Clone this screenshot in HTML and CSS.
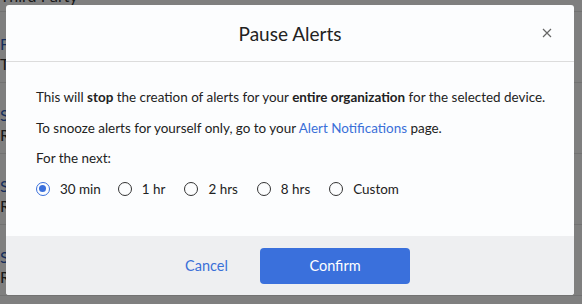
FILE: index.html
```html
<!DOCTYPE html>
<html lang="en">
<head>
    <meta charset="UTF-8">
    <title>Pause Alerts</title>
    <link rel="stylesheet" href="styles.css">
</head>
<body>
    <!-- page behind the overlay -->
    <div class="page">
        <div class="row row-top"><span class="dark">Third Party</span></div>
        <div class="row"><span class="link">F</span><span class="dark">T</span></div>
        <div class="row"><span class="link">S</span><span class="dark">R</span></div>
        <div class="row"><span class="link">S</span><span class="dark">R</span></div>
        <div class="row"><span class="link">S</span><span class="dark">R</span></div>
    </div>

    <div class="overlay">
        <div class="modal">
            <div class="modal-header">
                <h2>Pause Alerts</h2>
                <button class="close" aria-label="Close">
                    <svg width="10" height="10" viewBox="0 0 10 10">
                        <path d="M1 1 L9 9 M9 1 L1 9" stroke="#666" stroke-width="1.2" fill="none"/>
                    </svg>
                </button>
            </div>
            <div class="modal-body">
                <p>This will <b>stop</b> the creation of alerts for your <b>entire organization</b> for the selected device.</p>
                <p>To snooze alerts for yourself only, go to your <a href="#">Alert Notifications</a> page.</p>
                <p>For the next:</p>
                <div class="options">
                    <label class="option"><span class="radio checked"></span>30 min</label>
                    <label class="option"><span class="radio"></span>1 hr</label>
                    <label class="option"><span class="radio"></span>2 hrs</label>
                    <label class="option"><span class="radio"></span>8 hrs</label>
                    <label class="option"><span class="radio"></span>Custom</label>
                </div>
            </div>
            <div class="modal-footer">
                <button class="btn-cancel">Cancel</button>
                <button class="btn-confirm">Confirm</button>
            </div>
        </div>
    </div>
</body>
</html>
```

FILE: styles.css
```css
* {
    margin: 0;
    padding: 0;
    box-sizing: border-box;
}

body {
    font-family: 'Lato', 'Noto Sans', sans-serif;
    color: #222;
    background: #fff;
    width: 582px;
    height: 304px;
    overflow: hidden;
    position: relative;
}

/* Page under the backdrop */
.row {
    height: 71px;
    border-bottom: 1px solid #e4e4e4;
    padding: 22px 0 0 0;
    font-size: 16px;
    line-height: 20px;
    display: flex;
    flex-direction: column;
}

.row-top {
    height: 24px;
    padding: 0;
    margin-top: -12px;
    line-height: 16px;
    padding-top: 0;
}

.row .link {
    color: #2d5bb9;
}

.row .dark {
    color: #333;
}

/* Backdrop */
.overlay {
    position: absolute;
    inset: 0;
    background: rgba(0, 0, 0, 0.5);
    padding: 5px 8px 9px 6px;
}

.modal {
    background: #fcfdfe;
    border-radius: 3px;
    height: 290px;
    display: flex;
    flex-direction: column;
    overflow: hidden;
}

.modal-header {
    height: 57px;
    border-bottom: 1px solid #dcdcdc;
    display: flex;
    align-items: center;
    justify-content: center;
    position: relative;
}

.modal-header h2 {
    font-size: 19px;
    font-weight: 400;
    color: #222;
}

.close {
    position: absolute;
    right: 22px;
    top: 23px;
    background: none;
    border: none;
    width: 10px;
    height: 10px;
    display: flex;
}

.modal-body {
    flex: 1;
    padding: 27px 20px 0 30px;
    font-size: 13.45px;
    line-height: 17px;
    white-space: nowrap;
}

.modal-body p {
    margin-bottom: 13.5px;
}

.modal-body a {
    color: #3a6fd8;
    text-decoration: none;
}

.options {
    display: flex;
    margin-top: 12px;
}

.option {
    display: flex;
    align-items: center;
    margin-right: 19px;
}

.option:first-child {
    margin-right: 17px;
}

.radio {
    width: 14px;
    height: 14px;
    border: 1.5px solid #333;
    border-radius: 50%;
    margin-right: 10px;
    position: relative;
}

.radio.checked {
    border-color: #3a70dc;
}

.radio.checked::after {
    content: '';
    position: absolute;
    left: 2px;
    top: 2px;
    width: 7px;
    height: 7px;
    border-radius: 50%;
    background: #3a70dc;
}

.modal-footer {
    height: 59px;
    background: #eeeff1;
    display: flex;
    align-items: center;
    padding-left: 153px;
}

.modal-footer button {
    font-family: inherit;
    font-size: 14.5px;
    border: none;
    cursor: pointer;
}

.btn-cancel {
    background: none;
    color: #3a6fd8;
    width: 101px;
    padding-right: 6px;
}

.btn-confirm {
    background: #3a70dc;
    color: #fff;
    width: 150px;
    height: 36px;
    border-radius: 4px;
}
```
